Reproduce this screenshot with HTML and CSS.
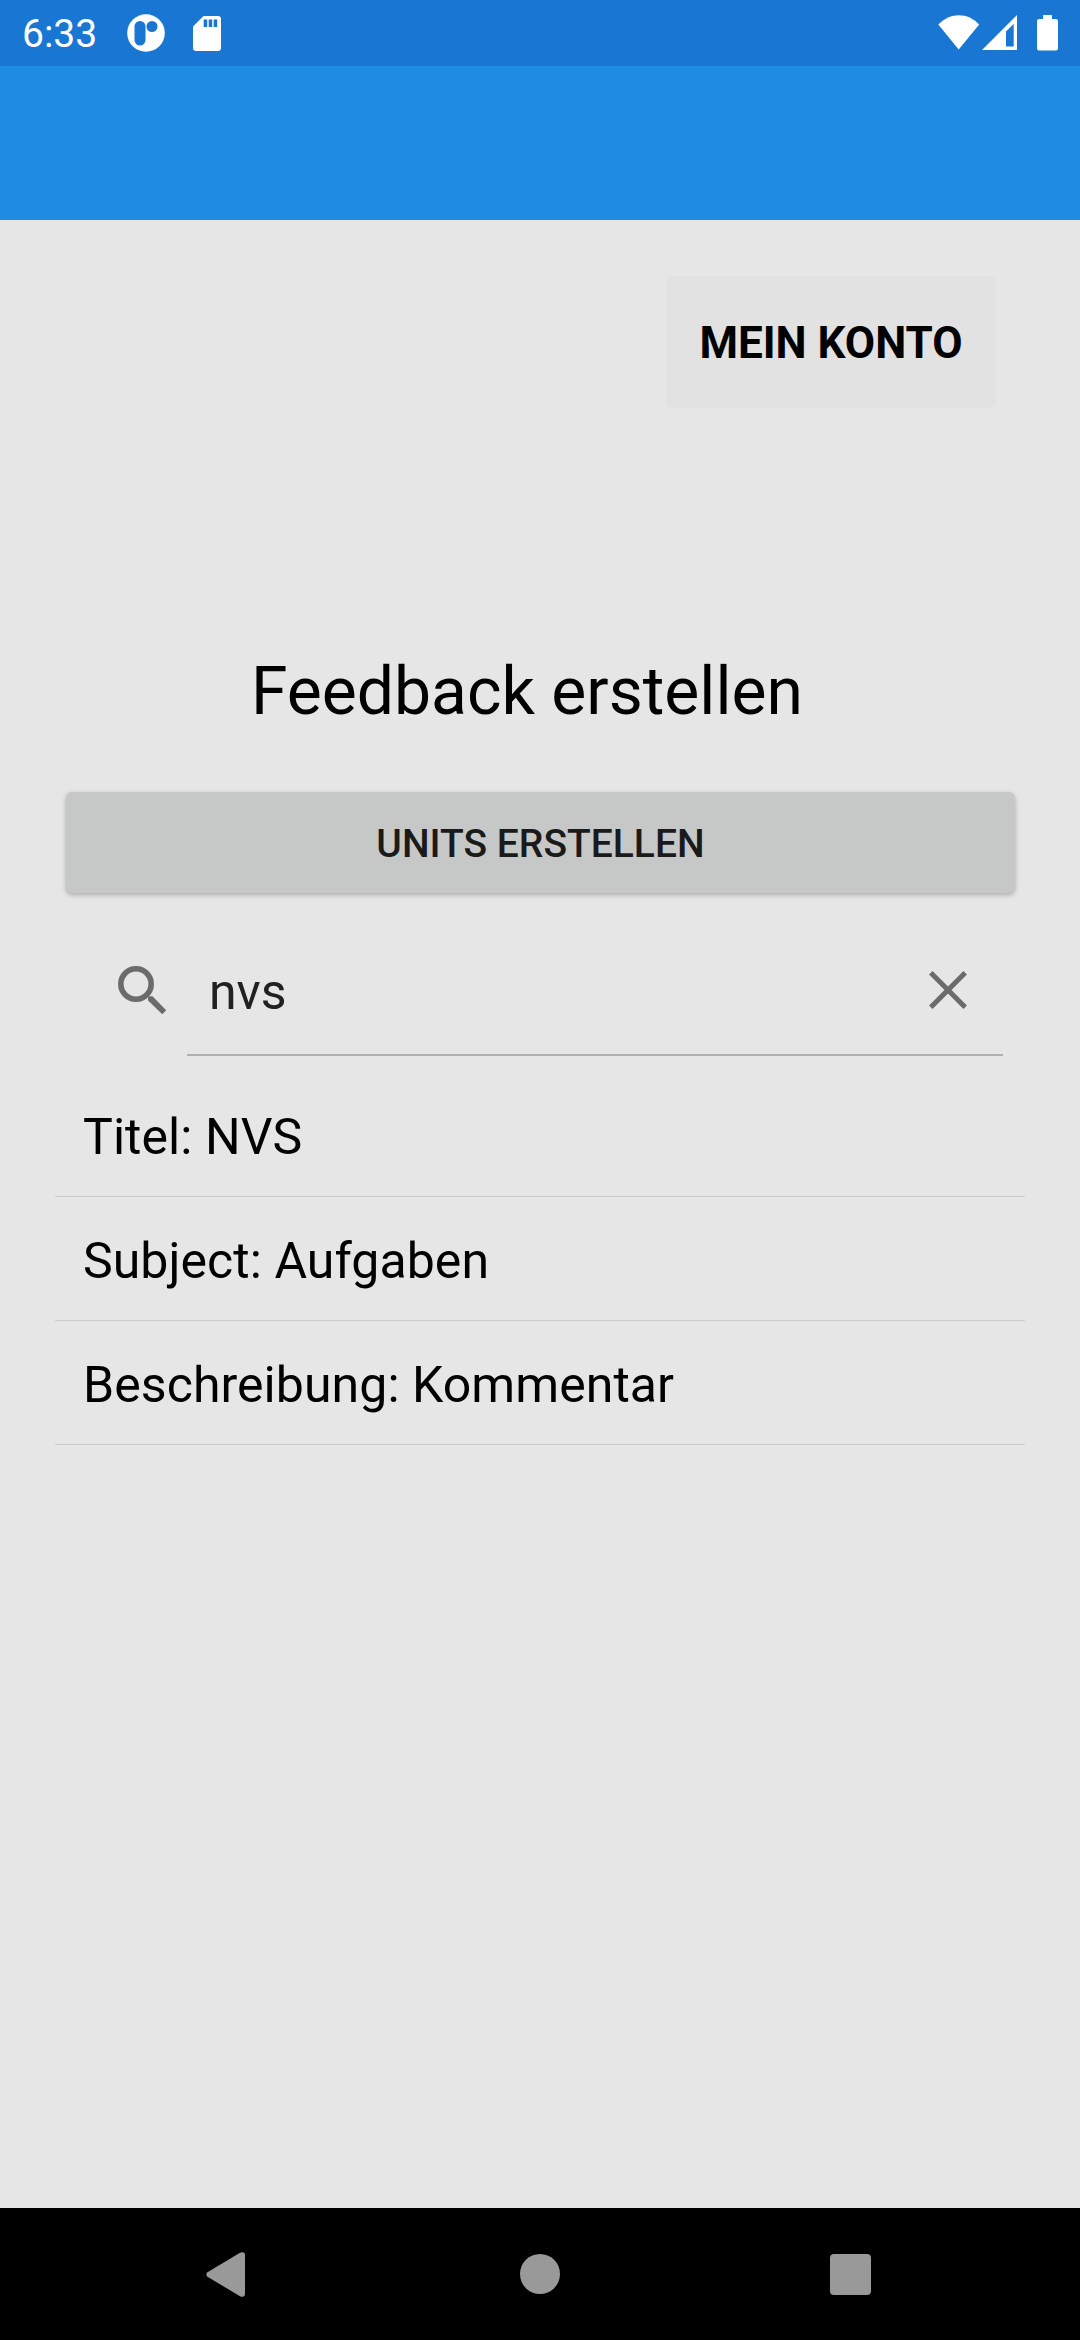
FILE: index.html
```html
<!DOCTYPE html>
<html lang="de">
<head>
<meta charset="utf-8">
<title>Feedback erstellen</title>
<link rel="stylesheet" href="styles.css">
</head>
<body>
<div class="screen">
  <header class="status-bar">
    <span class="clock">6:33</span>
    <svg class="icon-app" width="38" height="38" viewBox="0 0 38 38">
      <circle cx="19" cy="19" r="18.8" fill="#fff"/>
      <rect x="7.5" y="7" width="11" height="24.500" rx="5.500" fill="#1976d2"/>
      <circle cx="25" cy="12.500" r="5.500" fill="#1976d2"/>
    </svg>
    <svg class="icon-sd" width="28" height="35" viewBox="0 0 28 35">
      <path fill="#fff" d="M10.500 0H25a3 3 0 0 1 3 3V32a3 3 0 0 1-3 3H3a3 3 0 0 1-3-3V10.500Z"/>
      <path fill="#1976d2" d="M10.700 3.500h3.500v7.500h-3.500zM15.700 3.500h3.500v7.500h-3.500zM20.700 3.500h3.500v7.500h-3.500z"/>
    </svg>
    <span class="spacer"></span>
    <svg class="icon-wifi" width="42" height="35" viewBox="0 0 42 35">
      <path fill="#fff" d="M0.300 9.500C12-3 30-3 41.200 9.500L20.700 34.500Z"/>
    </svg>
    <svg class="icon-signal" width="35" height="35" viewBox="0 0 35 35">
      <path fill="#fff" fill-rule="evenodd" d="M35 0V35H0ZM31.700 9L24 16.500V31.500H31.700Z"/>
    </svg>
    <svg class="icon-battery" width="21" height="36" viewBox="0 0 21 36">
      <path fill="#fff" d="M6 0H15V4H19a2 2 0 0 1 2 2V33.500a2 2 0 0 1-2 2H2a2 2 0 0 1-2-2V6a2 2 0 0 1 2-2H6Z"/>
    </svg>
  </header>
  <div class="app-bar"></div>
  <main class="content">
    <button class="account-button">MEIN KONTO</button>
    <h1 class="title">Feedback erstellen</h1>
    <button class="units-button">UNITS ERSTELLEN</button>
    <div class="search">
      <svg width="49" height="49" viewBox="0 0 49 49" fill="none" stroke="#6b6b6b">
        <circle cx="18" cy="18" r="15.200" stroke-width="5.600"/>
        <path fill="#6b6b6b" stroke="none" d="M30 34.500V31.500L31.500 30.300H34.500L48.200 44.300L44.300 48.200Z"/>
      </svg>
      <div class="search-field">
        <span class="query">nvs</span>
        <svg width="38" height="38" viewBox="0 0 38 38" stroke="#6b6b6b" stroke-width="5">
          <path d="M1.800 1.800L36.200 36.200M36.200 1.800L1.800 36.200"/>
        </svg>
      </div>
    </div>
    <ul class="results">
      <li>Titel: NVS</li>
      <li>Subject: Aufgaben</li>
      <li>Beschreibung: Kommentar</li>
    </ul>
  </main>
  <nav class="nav-bar">
    <svg width="40" height="46" viewBox="0 0 40 46">
      <path fill="#999" d="M1.500 20.200L34 0.800Q39 -1.200 39 3.500V41.500Q39 46 34 44.200L1.500 24.800Q-0.800 22.500 1.500 20.200Z"/>
    </svg>
    <span class="nav-home"></span>
    <span class="nav-recent"></span>
  </nav>
</div>
</body>
</html>
```
FILE: styles.css
```css
* {
  box-sizing: border-box;
}

body {
  margin: 0;
  font-family: Roboto, sans-serif;
}

.screen {
  display: flex;
  flex-direction: column;
  width: 1080px;
  height: 2340px;
  background: #e6e6e6;
  color: #000;
}

svg {
  display: block;
  flex: none;
}

.status-bar {
  display: flex;
  align-items: flex-start;
  height: 66px;
  padding: 0 22px;
  background: #1976d2;
}

.clock {
  width: 105px;
  padding-top: 1px;
  font-size: 39px;
  line-height: 66px;
  color: #fff;
}

.icon-app {
  margin-top: 14px;
}

.icon-sd {
  margin: 16px 0 0 28px;
}

.spacer {
  flex: 1;
}

.icon-wifi {
  margin: 15px 2px 0 0;
}

.icon-signal {
  margin: 15px 20px 0 0;
}

.icon-battery {
  margin-top: 15px;
}

.app-bar {
  height: 154px;
  background: #1f8ce3;
}

.content {
  display: flex;
  flex: 1;
  flex-direction: column;
  padding: 0 55px;
}

button {
  border: 0;
  padding: 2px 0 0;
  font-family: inherit;
}

.account-button {
  align-self: flex-end;
  width: 330px;
  height: 132px;
  margin: 56px 29px 0 0;
  border-radius: 6px;
  background: #e2e2e2;
  color: #000;
  font-size: 44px;
  font-weight: 700;
}

.title {
  margin: 245px 0 0;
  padding-left: 196px;
  font-size: 66px;
  font-weight: 400;
  line-height: 78px;
}

.units-button {
  height: 101px;
  margin: 61px 10px 0 11px;
  border-radius: 6px;
  background: #c6c8c7;
  box-shadow: 0 2px 5px rgba(0, 0, 0, 0.25);
  color: #1a1a1a;
  font-size: 39px;
  font-weight: 500;
}

.search {
  display: flex;
  align-items: center;
  height: 163px;
  padding: 33px 22px 0 63px;
  gap: 20px;
}

.search-field {
  display: flex;
  flex: 1;
  align-items: center;
  justify-content: space-between;
  height: 130px;
  padding: 0 36px 0 22px;
  border-bottom: 2px solid #b0b0b0;
}

.search > svg {
  margin-top: -2px;
}

.query {
  padding-top: 3px;
  color: #212121;
  font-size: 50px;
  line-height: 60px;
}

.results {
  margin: 17px 0 0;
  padding: 0;
  list-style: none;
}

.results li {
  height: 124px;
  padding: 5px 28px 0;
  border-bottom: 1px solid #cbcbcb;
  font-size: 50px;
  letter-spacing: 0.06px;
  line-height: 118px;
}

.nav-bar {
  display: flex;
  align-items: flex-start;
  height: 132px;
  padding: 44px 0 0 206px;
  background: #000;
}

.nav-home {
  width: 40px;
  height: 40px;
  margin: 2px 0 0 274px;
  border-radius: 50%;
  background: #999;
}

.nav-recent {
  width: 41px;
  height: 41px;
  margin: 2px 0 0 270px;
  border-radius: 4px;
  background: #999;
}
```
